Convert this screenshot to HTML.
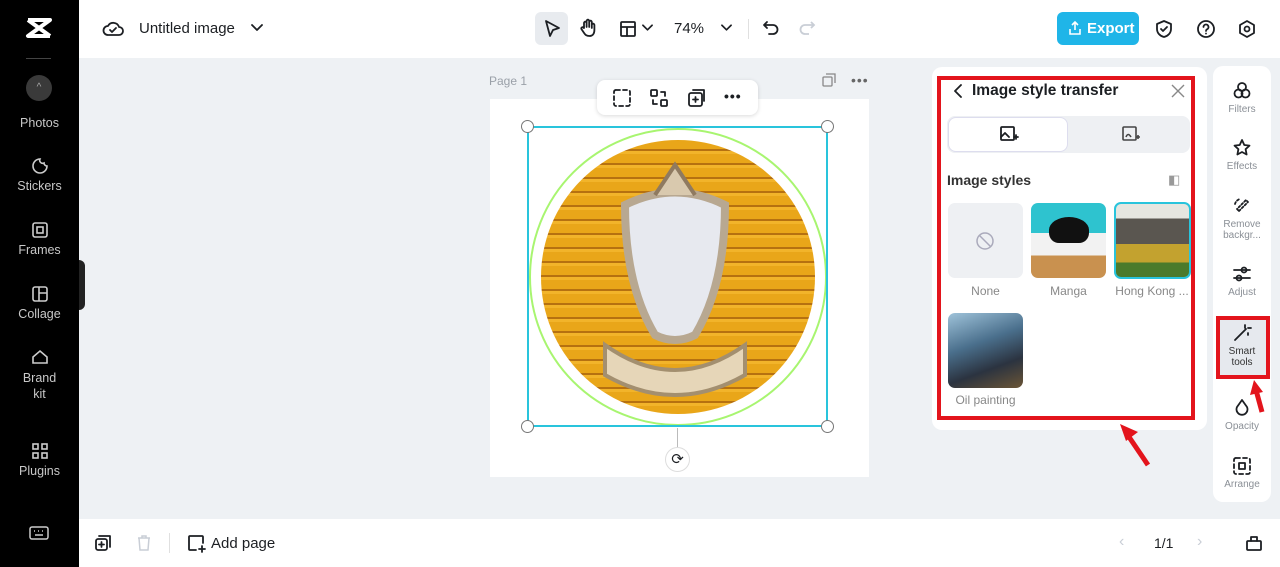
<!DOCTYPE html>
<html><head><meta charset="utf-8"><style>
*{box-sizing:border-box;margin:0;padding:0}
body{width:1280px;height:567px;overflow:hidden;font-family:"Liberation Sans",sans-serif;background:#eef1f4;position:relative;color:#1c1f23}
.abs{position:absolute}
.side{left:0;top:0;width:79px;height:567px;background:#000;color:#c8c8c8}
.side .it{position:absolute;width:79px;text-align:center;font-size:12.5px}
.side svg{display:block;margin:0 auto 4px}
.top{left:79px;top:0;width:1201px;height:58px;background:#fff}
.bot{left:79px;top:519px;width:1201px;height:48px;background:#fff}
.ic{stroke:#1c1f23;fill:none;stroke-width:1.8;stroke-linecap:round;stroke-linejoin:round}
.rt .it{position:absolute;width:58px;text-align:center;font-size:10px;color:#8a8f96;line-height:11px}
.rt svg{display:block;margin:0 auto 3px}
</style></head><body>
<div class="abs side">
 <svg class="abs" style="left:25px;top:17px" width="28" height="22" viewBox="0 0 28 22"><path d="M3 3h22L3 19h22M3 3l22 16" stroke="#fff" stroke-width="4" fill="none" stroke-linejoin="round"/></svg>
 <div class="abs" style="left:26px;top:58px;width:25px;height:1px;background:#444"></div>
 <div class="abs" style="left:26px;top:75px;width:26px;height:26px;border-radius:50%;background:#3a3a3a;color:#aaa;font-size:10px;text-align:center;line-height:26px">^</div>
 <div class="it" style="top:116px">Photos</div>
 <div class="it" style="top:157px"><svg width="18" height="18" viewBox="0 0 18 18"><path d="M16 9A7 7 0 1 1 9 2a3 3 0 0 0 4 4 3 3 0 0 0 3 3z" stroke="#ccc" stroke-width="1.6" fill="none"/></svg>Stickers</div>
 <div class="it" style="top:221px"><svg width="18" height="18" viewBox="0 0 18 18"><rect x="2" y="2" width="14" height="14" rx="2" stroke="#ccc" stroke-width="1.6" fill="none"/><rect x="6" y="6" width="6" height="6" stroke="#ccc" stroke-width="1.6" fill="none"/></svg>Frames</div>
 <div class="it" style="top:285px"><svg width="18" height="18" viewBox="0 0 18 18"><rect x="2" y="2" width="14" height="14" rx="2" stroke="#ccc" stroke-width="1.6" fill="none"/><path d="M8 2v14M8 8h8" stroke="#ccc" stroke-width="1.6"/></svg>Collage</div>
 <div class="it" style="top:348px;line-height:16px"><svg width="18" height="18" viewBox="0 0 18 18"><path d="M2 15h14V9L9 3 2 9z" stroke="#ccc" stroke-width="1.6" fill="none"/></svg>Brand<br>kit</div>
 <div class="it" style="top:442px"><svg width="18" height="18" viewBox="0 0 18 18"><g stroke="#ccc" stroke-width="1.6" fill="none"><rect x="2" y="2" width="5" height="5"/><rect x="11" y="2" width="5" height="5"/><rect x="2" y="11" width="5" height="5"/><rect x="11" y="11" width="5" height="5"/></g></svg>Plugins</div>
 <svg class="abs" style="left:29px;top:525px" width="20" height="16" viewBox="0 0 20 16"><rect x="1" y="2" width="18" height="12" rx="2" stroke="#ccc" stroke-width="1.5" fill="none"/><path d="M5 6h1M9 6h1M13 6h1M6 10h8" stroke="#ccc" stroke-width="1.5"/></svg>
</div>
<div class="abs" style="left:79px;top:260px;width:6px;height:50px;background:#222;border-radius:0 6px 6px 0"></div>
<div class="abs top">
 <svg class="abs" style="left:23px;top:19px" width="22" height="18" viewBox="0 0 22 18"><path class="ic" d="M6 16h11a4 4 0 0 0 0-8 6 6 0 0 0-11-1 4.5 4.5 0 0 0 0 9zM8 11l2 2 4-4"/></svg>
 <div class="abs" style="left:60px;top:20px;font-size:15px">Untitled image</div>
 <svg class="abs" style="left:172px;top:24px" width="12" height="8" viewBox="0 0 12 8"><path class="ic" d="M1 1l5 5 5-5"/></svg>
 <div class="abs" style="left:456px;top:12px;width:33px;height:33px;background:#e8ebef;border-radius:6px"></div>
 <svg class="abs" style="left:464px;top:19px" width="18" height="20" viewBox="0 0 18 20"><path class="ic" d="M3 2l13 7-6 2-3 6z"/></svg>
 <svg class="abs" style="left:500px;top:18px" width="18" height="20" viewBox="0 0 18 20"><path class="ic" d="M5 10V5a1.3 1.3 0 0 1 2.6 0v4V3a1.3 1.3 0 0 1 2.6 0v6V4a1.3 1.3 0 0 1 2.6 0v6V7a1.3 1.3 0 0 1 2.6 0v5c0 4-2 6-5 6s-4-1-6-4l-2-3a1.3 1.3 0 0 1 2-1.5z"/></svg>
 <svg class="abs" style="left:540px;top:20px" width="18" height="18" viewBox="0 0 18 18"><rect class="ic" x="2" y="2" width="14" height="14" rx="1"/><path class="ic" d="M2 7h14M8 7v9"/></svg>
 <svg class="abs" style="left:563px;top:24px" width="11" height="8" viewBox="0 0 12 8"><path class="ic" d="M1 1l5 5 5-5"/></svg>
 <div class="abs" style="left:595px;top:20px;font-size:15px">74%</div>
 <svg class="abs" style="left:642px;top:24px" width="11" height="8" viewBox="0 0 12 8"><path class="ic" d="M1 1l5 5 5-5"/></svg>
 <div class="abs" style="left:669px;top:19px;width:1px;height:20px;background:#e0e0e0"></div>
 <svg class="abs" style="left:683px;top:19px" width="18" height="18" viewBox="0 0 18 18"><path class="ic" d="M5 3L2 6l3 3M2 6h9a4 4 0 0 1 0 9H7"/></svg>
 <svg class="abs" style="left:719px;top:19px" width="18" height="18" viewBox="0 0 18 18"><path d="M13 3l3 3-3 3M16 6H7a4 4 0 0 0 0 9h4" stroke="#c9ced6" stroke-width="1.8" fill="none"/></svg>
 <div class="abs" style="left:978px;top:12px;width:82px;height:33px;background:#1fb5e8;border-radius:6px;color:#fff;font-size:15px;font-weight:bold;line-height:33px;padding-left:30px">Export</div>
 <svg class="abs" style="left:988px;top:20px" width="16" height="16" viewBox="0 0 16 16"><path d="M3 9v5h10V9M8 2v8M5 5l3-3 3 3" stroke="#fff" stroke-width="1.6" fill="none"/></svg>
 <svg class="abs" style="left:1076px;top:19px" width="18" height="20" viewBox="0 0 18 20"><path class="ic" d="M9 2l7 3v5c0 4-3 7-7 8-4-1-7-4-7-8V5zM6 10l2 2 4-4"/></svg>
 <svg class="abs" style="left:1117px;top:19px" width="20" height="20" viewBox="0 0 20 20"><circle class="ic" cx="10" cy="10" r="8"/><path class="ic" d="M7.5 8a2.5 2.5 0 1 1 3.5 2.3c-.7.4-1 .9-1 1.7M10 14.5v.1"/></svg>
 <svg class="abs" style="left:1158px;top:19px" width="20" height="20" viewBox="0 0 20 20"><path class="ic" d="M10 2l7 4v8l-7 4-7-4V6z"/><circle class="ic" cx="10" cy="10" r="2.5"/></svg>
</div>
<!-- canvas -->
<div class="abs" style="left:489px;top:74px;font-size:12px;color:#9aa0a8">Page 1</div>
<svg class="abs" style="left:822px;top:73px" width="14" height="14" viewBox="0 0 14 14"><rect x="1" y="4" width="9" height="9" rx="1" stroke="#888" fill="none" stroke-width="1.3"/><path d="M4 1h9v9" stroke="#888" fill="none" stroke-width="1.3"/></svg>
<div class="abs" style="left:851px;top:72px;font-size:14px;color:#666;letter-spacing:1px">•••</div>
<div class="abs" style="left:490px;top:99px;width:379px;height:378px;background:#fff"></div>
<div class="abs" style="left:529px;top:128px;width:298px;height:298px;border-radius:50%;border:2px solid #a8f570"></div>
<div class="abs" style="left:541px;top:140px;width:274px;height:274px;border-radius:50%;background:repeating-linear-gradient(180deg,#e9a619 0 9px,#b67110 9px 11px,#f2b42a 11px 14px)"></div>
<svg class="abs" style="left:590px;top:160px" width="170" height="240" viewBox="0 0 170 240">
 <path d="M35 45q50-25 100 0 0 80-30 130-20 10-40 0-30-50-30-130z" fill="#e7e9ef" stroke="#b8a891" stroke-width="8"/>
 <path d="M65 35l20-30 20 30" fill="#d9c9ae" stroke="#8f7a60" stroke-width="4"/>
 <path d="M15 185q70 50 140 0v30q-70 40-140 0z" fill="#e6d6b8" stroke="#a38f6f" stroke-width="4"/>
</svg>
<div class="abs" style="left:527px;top:126px;width:301px;height:301px;border:2px solid #29c4dc"></div>
<div class="abs" style="left:521px;top:120px;width:13px;height:13px;border-radius:50%;background:#fff;border:1px solid #777"></div>
<div class="abs" style="left:821px;top:120px;width:13px;height:13px;border-radius:50%;background:#fff;border:1px solid #777"></div>
<div class="abs" style="left:521px;top:420px;width:13px;height:13px;border-radius:50%;background:#fff;border:1px solid #777"></div>
<div class="abs" style="left:821px;top:420px;width:13px;height:13px;border-radius:50%;background:#fff;border:1px solid #777"></div>
<div class="abs" style="left:677px;top:428px;width:1px;height:20px;background:#bbb"></div>
<div class="abs" style="left:665px;top:447px;width:25px;height:25px;border-radius:50%;background:#fff;border:1px solid #ddd;text-align:center;line-height:23px;font-size:15px">⟳</div>
<div class="abs" style="left:597px;top:80px;width:161px;height:35px;background:#fff;border-radius:8px;box-shadow:0 1px 4px rgba(0,0,0,.15)"></div>
<svg class="abs" style="left:612px;top:88px" width="20" height="20" viewBox="0 0 20 20"><rect class="ic" x="2" y="2" width="16" height="16" rx="2" stroke-dasharray="4 3"/></svg>
<svg class="abs" style="left:649px;top:88px" width="20" height="20" viewBox="0 0 20 20"><rect class="ic" x="2" y="2" width="6" height="6" rx="1"/><rect class="ic" x="12" y="12" width="6" height="6" rx="1"/><path class="ic" d="M12 4h4v4M8 16H4v-4"/></svg>
<svg class="abs" style="left:687px;top:88px" width="20" height="20" viewBox="0 0 20 20"><rect class="ic" x="2" y="5" width="13" height="13" rx="2"/><path class="ic" d="M6 2h11v11M8.5 9v5M6 11.5h5"/></svg>
<div class="abs" style="left:724px;top:88px;font-size:14px;font-weight:bold;letter-spacing:1px">•••</div>
<!-- panel -->
<div class="abs" style="left:932px;top:67px;width:275px;height:363px;background:#fff;border-radius:10px"></div>
<div class="abs" style="left:937px;top:76px;width:258px;height:344px;border:4px solid #e3141c"></div>
<svg class="abs" style="left:953px;top:84px" width="10" height="14" viewBox="0 0 10 14"><path class="ic" d="M8 1L2 7l6 6" stroke-width="2.2"/></svg>
<div class="abs" style="left:972px;top:82px;font-size:15.5px;font-weight:bold">Image style transfer</div>
<svg class="abs" style="left:1171px;top:84px" width="14" height="14" viewBox="0 0 14 14"><path d="M1 1l12 12M13 1L1 13" stroke="#888" stroke-width="1.4"/></svg>
<div class="abs" style="left:947px;top:116px;width:243px;height:37px;background:#eef0f3;border-radius:8px"></div>
<div class="abs" style="left:948px;top:117px;width:120px;height:35px;background:#fff;border-radius:8px;border:1px solid #dde"></div>
<svg class="abs" style="left:999px;top:124px" width="20" height="20" viewBox="0 0 20 20"><rect class="ic" x="2" y="3" width="13" height="13" rx="1"/><path class="ic" d="M2 13l4-4 4 4M15 13h4M17 11v4"/></svg>
<svg class="abs" style="left:1121px;top:124px" width="20" height="20" viewBox="0 0 20 20"><rect x="2" y="3" width="13" height="13" rx="1" stroke="#444" stroke-width="1.6" fill="none"/><path d="M5 13q2-5 5 0M15 13h4M17 11v4" stroke="#444" stroke-width="1.6" fill="none"/></svg>
<div class="abs" style="left:947px;top:172px;font-size:14px;font-weight:bold;color:#333">Image styles</div>
<div class="abs" style="left:1168px;top:172px;font-size:13px;color:#999">◧</div>
<div class="abs" style="left:948px;top:203px;width:75px;height:75px;background:#eef0f3;border-radius:7px"></div>
<svg class="abs" style="left:975px;top:231px" width="20" height="20" viewBox="0 0 20 20"><circle cx="10" cy="10" r="8" stroke="#aab" stroke-width="1.5" fill="none"/><path d="M4.5 4.5l11 11" stroke="#aab" stroke-width="1.5"/></svg>
<div class="abs" style="left:1031px;top:203px;width:75px;height:75px;border-radius:7px;background:linear-gradient(180deg,#2ec3cf 0 40%,#f2f2f2 40% 70%,#c9914f 70%);overflow:hidden"><div style="position:absolute;left:18px;top:14px;width:40px;height:26px;background:#111;border-radius:50% 50% 10px 10px"></div></div>
<div class="abs" style="left:1114px;top:202px;width:77px;height:77px;border-radius:7px;border:2px solid #29c4dc;background:linear-gradient(180deg,#e6e6e0 0 20%,#5a5650 20% 55%,#c3a22f 55% 80%,#4b7a2b 80%)"></div>
<div class="abs" style="left:948px;top:284px;width:75px;text-align:center;font-size:12px;color:#888">None</div>
<div class="abs" style="left:1031px;top:284px;width:75px;text-align:center;font-size:12px;color:#888">Manga</div>
<div class="abs" style="left:1112px;top:284px;width:80px;text-align:center;font-size:12px;color:#888;white-space:nowrap">Hong Kong ...</div>
<div class="abs" style="left:948px;top:313px;width:75px;height:75px;border-radius:7px;background:linear-gradient(160deg,#9fc3da 0%,#4a6f8c 40%,#2b3340 70%,#6b5536 100%)"></div>
<div class="abs" style="left:948px;top:393px;width:75px;text-align:center;font-size:12px;color:#888">Oil painting</div>
<svg class="abs" style="left:1115px;top:420px" width="40" height="50" viewBox="0 0 40 50"><path d="M33 45L12 14" stroke="#e3141c" stroke-width="5"/><path d="M5 4l18 8-12 9z" fill="#e3141c"/></svg>
<!-- right toolbar -->
<div class="abs rt" style="left:1213px;top:66px;width:58px;height:436px;background:#fff;border-radius:10px">
 <div class="it" style="top:15px"><svg width="20" height="20" viewBox="0 0 20 20"><g class="ic" stroke-width="1.5"><circle cx="10" cy="6" r="4"/><circle cx="6.5" cy="12.5" r="4"/><circle cx="13.5" cy="12.5" r="4"/></g></svg>Filters</div>
 <div class="it" style="top:72px"><svg width="20" height="20" viewBox="0 0 20 20"><path class="ic" stroke-width="1.5" d="M10 2l2.3 5 5.2.6-3.9 3.6 1 5.3L10 14l-4.6 2.5 1-5.3L2.5 7.6 7.7 7z"/></svg>Effects</div>
 <div class="it" style="top:130px"><svg width="20" height="20" viewBox="0 0 20 20"><path class="ic" stroke-width="1.5" d="M7 15l9-9-2-2-9 9zM3 8a7 7 0 0 1 5-5" stroke-dasharray="2 2"/></svg>Remove<br>backgr...</div>
 <div class="it" style="top:198px"><svg width="20" height="20" viewBox="0 0 20 20"><path class="ic" stroke-width="1.5" d="M2 6h16M2 14h16"/><circle cx="12" cy="6" r="2.5" fill="#fff" class="ic"/><circle cx="7" cy="14" r="2.5" fill="#fff" class="ic"/></svg>Adjust</div>
 <div class="abs" style="left:3px;top:250px;width:54px;height:63px;background:#e6e9ee;border:4px solid #e3141c"></div>
 <div class="it" style="top:257px"><svg width="20" height="20" viewBox="0 0 20 20"><path class="ic" stroke-width="1.8" d="M3 17L14 6M13 2v3M16 5h3M16 10v2"/></svg><span style="color:#333">Smart<br>tools</span></div>
 <div class="it" style="top:332px"><svg width="20" height="20" viewBox="0 0 20 20"><path class="ic" stroke-width="1.5" d="M10 2l5 7a5.5 5.5 0 1 1-10 0z"/></svg>Opacity</div>
 <div class="it" style="top:390px"><svg width="20" height="20" viewBox="0 0 20 20"><rect class="ic" stroke-width="1.5" x="2" y="2" width="16" height="16" rx="2" stroke-dasharray="4 3"/><rect class="ic" stroke-width="1.5" x="7" y="7" width="6" height="6"/></svg>Arrange</div>
</div>
<svg class="abs" style="left:1246px;top:378px" width="24" height="36" viewBox="0 0 24 36"><path d="M16 34L10 12" stroke="#e3141c" stroke-width="5"/><path d="M8 2l9 12-13 3z" fill="#e3141c"/></svg>
<!-- bottom -->
<div class="abs bot">
 <svg class="abs" style="left:15px;top:15px" width="18" height="18" viewBox="0 0 18 18"><rect class="ic" x="2" y="5" width="11" height="11" rx="2"/><path class="ic" d="M5 2h11v11M7.5 8v5M5 10.5h5"/></svg>
 <svg class="abs" style="left:57px;top:15px" width="16" height="18" viewBox="0 0 16 18"><path d="M2 4h12M6 4V2h4v2M3 4l1 12h8l1-12" stroke="#c9ced6" stroke-width="1.5" fill="none"/></svg>
 <div class="abs" style="left:90px;top:14px;width:1px;height:20px;background:#e0e0e0"></div>
 <svg class="abs" style="left:108px;top:15px" width="19" height="19" viewBox="0 0 19 19"><path class="ic" d="M16 9V3a1 1 0 0 0-1-1H3a1 1 0 0 0-1 1v12a1 1 0 0 0 1 1h6M15 12v6M12 15h6"/></svg>
 <div class="abs" style="left:132px;top:16px;font-size:15px">Add page</div>
 <div class="abs" style="left:1040px;top:14px;font-size:16px;color:#c9ced6">‹</div>
 <div class="abs" style="left:1075px;top:16px;font-size:14px">1/1</div>
 <div class="abs" style="left:1118px;top:14px;font-size:16px;color:#c9ced6">›</div>
 <svg class="abs" style="left:1166px;top:15px" width="18" height="18" viewBox="0 0 18 18"><rect class="ic" x="2" y="7" width="14" height="9" rx="1"/><path class="ic" d="M6 7V3h6v4"/></svg>
</div>
</body></html>
